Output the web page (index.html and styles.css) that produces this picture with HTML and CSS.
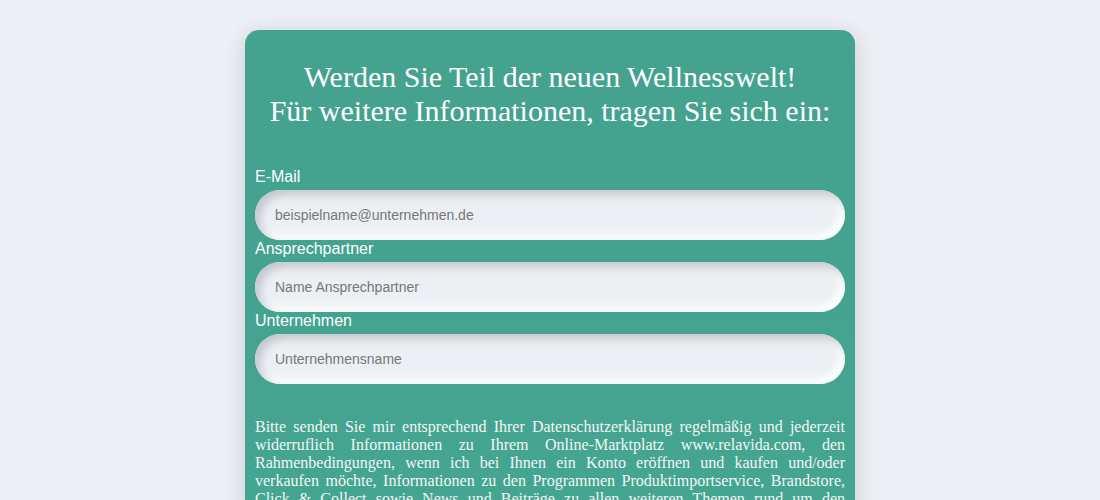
FILE: index.html
```html
<!DOCTYPE html>
<html lang="de">
<head>
<meta charset="utf-8">
<title>Wellnesswelt</title>
<link rel="stylesheet" href="styles.css">
</head>
<body>
<main class="card">
  <h1 class="title">Werden Sie Teil der neuen Wellnesswelt!<br>Für weitere Informationen, tragen Sie sich ein:</h1>
  <form class="form">
    <label class="label" for="email">E-Mail</label>
    <input class="field" id="email" type="email" placeholder="beispielname@unternehmen.de">
    <label class="label" for="contact">Ansprechpartner</label>
    <input class="field" id="contact" type="text" placeholder="Name Ansprechpartner">
    <label class="label" for="company">Unternehmen</label>
    <input class="field" id="company" type="text" placeholder="Unternehmensname">
    <p class="consent">Bitte senden Sie mir entsprechend Ihrer Datenschutzerklärung regelmäßig und jederzeit widerruflich Informationen zu Ihrem Online-Marktplatz www.relavida.com, den Rahmenbedingungen, wenn ich bei Ihnen ein Konto eröffnen und kaufen und/oder verkaufen möchte, Informationen zu den Programmen Produktimportservice, Brandstore, Click &amp; Collect sowie News und Beiträge zu allen weiteren Themen rund um den Marktplatz zu. Ihre Einwilligung können Sie jederzeit widerrufen.</p>
  </form>
</main>
</body>
</html>
```
FILE: styles.css
```css
html, body {
  margin: 0;
  padding: 0;
}
body {
  background: #eceff3;
  font-family: "Liberation Sans", Arial, sans-serif;
  padding: 30px 0 40px;
}
.card {
  width: 610px;
  margin: 0 auto;
  box-sizing: border-box;
  padding: 30px 10px 20px;
  border-radius: 14px;
  background: linear-gradient(180deg, #44a28f 0%, #44a590 100%);
  box-shadow: 0 4px 20px rgba(60, 80, 100, 0.2);
  color: #fff;
}
.title {
  margin: 0 0 40px;
  font-family: "Liberation Serif", "Times New Roman", serif;
  font-weight: normal;
  font-size: 30px;
  line-height: 34px;
  text-align: center;
}
.form {
  display: flex;
  flex-direction: column;
}
.label {
  font-size: 16px;
  line-height: 18px;
  margin-bottom: 4px;
}
.field {
  height: 50px;
  box-sizing: border-box;
  border: none;
  border-radius: 25px;
  padding: 0 20px;
  background: #eceff3;
  font-family: "Liberation Sans", Arial, sans-serif;
  font-size: 14px;
  color: #333;
  box-shadow: inset 5px 5px 8px #c3c7cc, inset -5px -5px 8px #ffffff;
  outline: none;
}
.field::placeholder {
  color: #777;
}
.consent {
  margin: 34px 0 0;
  font-family: "Liberation Serif", "Times New Roman", serif;
  font-size: 16px;
  line-height: 18px;
  text-align: justify;
  color: #f2f7f5;
}
```
